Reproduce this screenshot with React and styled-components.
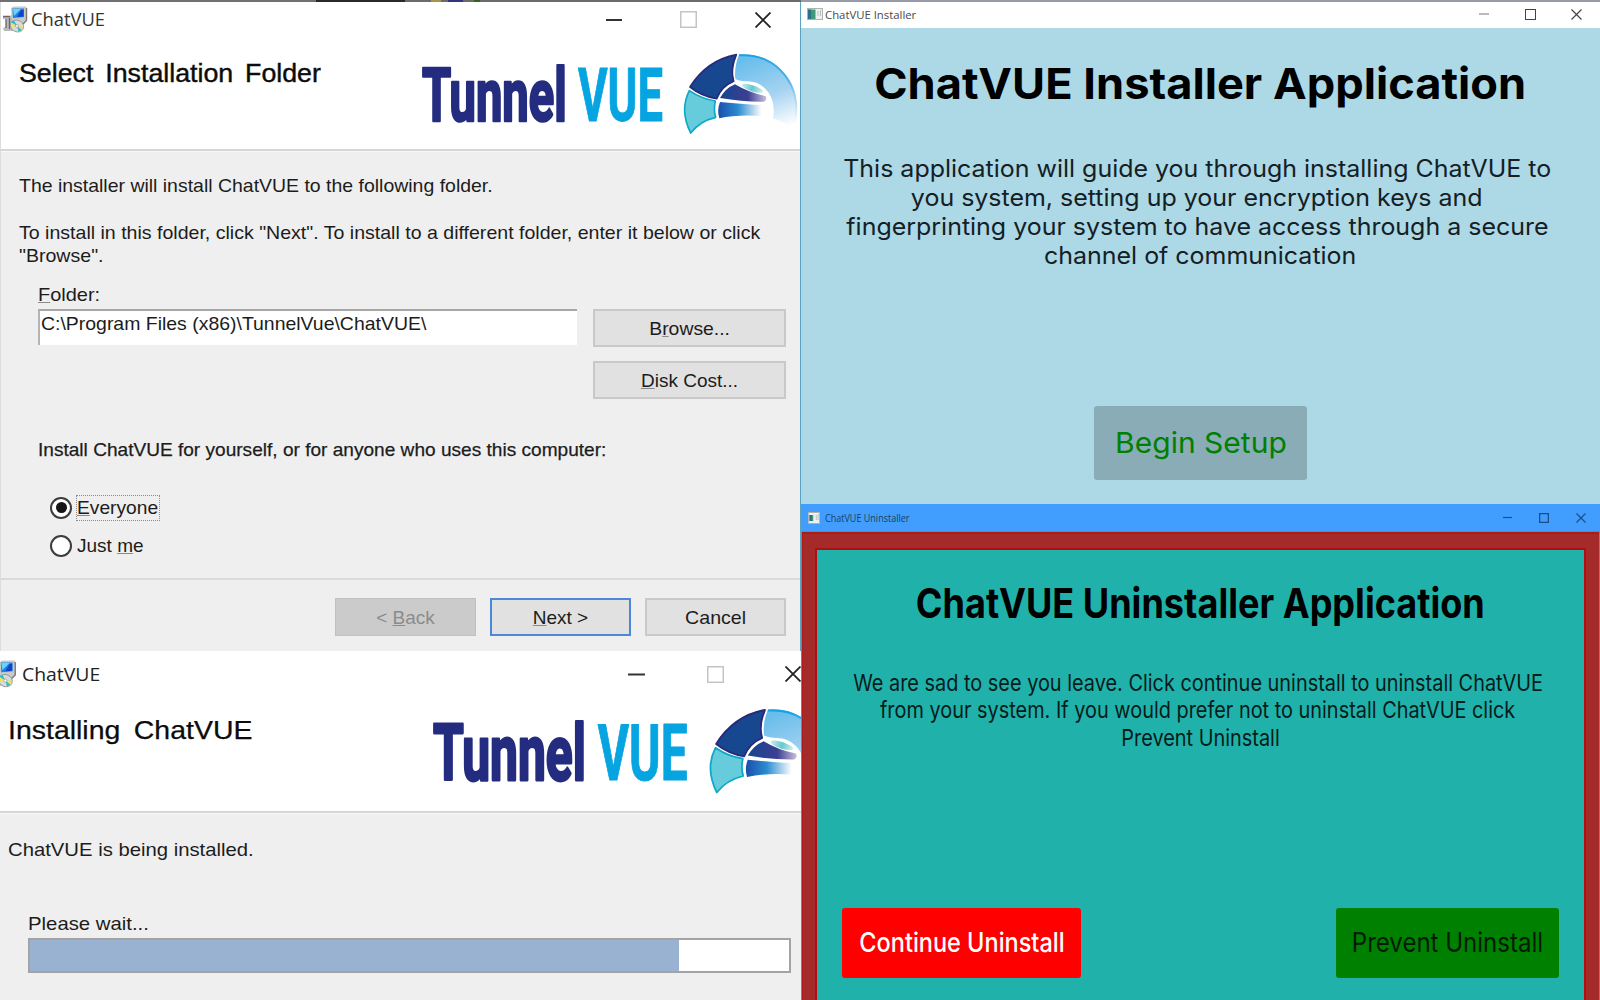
import React from "react";
import styled, { createGlobalStyle } from "styled-components";

const GlobalStyle = createGlobalStyle`
  * { box-sizing: border-box; }
  body { margin: 0; background: #fff; overflow: hidden; }
`;

const dialogFont = '"Liberation Sans", Arial, sans-serif';
const captionFont = '"Open Sans", "Segoe UI", sans-serif';
const appFont = 'Inter, sans-serif';

const Board = styled.main`
  display: grid;
  grid-template-columns: 801px 799px;
  width: 1600px;
  height: 1000px;
  overflow: hidden;
`;

const Column = styled.div`
  display: flex;
  flex-direction: column;
  min-width: 0;
  overflow: hidden;
`;

/* Text primitive: one line, optionally condensed or expanded */
const Line = styled.div`
  font-family: ${(p) => p.$font || dialogFont};
  font-size: ${(p) => p.$size || 19}px;
  font-weight: ${(p) => p.$weight || 400};
  line-height: ${(p) => p.$lh || 23}px;
  word-spacing: ${(p) => p.$word || 0}px;
  color: ${(p) => p.$color || "#1c1c1c"};
  -webkit-text-stroke: ${(p) => p.$stroke || 0}px currentColor;
  white-space: pre;
  transform: scaleX(${(p) => p.$stretch || 1});
  transform-origin: ${(p) => p.$origin || "left"} center;
  text-align: ${(p) => p.$origin || "left"};
`;

const Key = styled.span`
  text-decoration: underline;
  text-decoration-thickness: 1px;
  text-decoration-color: #8a8a8a;
  text-underline-offset: 1px;
`;

/* Wizard windows */
const DesktopStrip = styled.div`
  height: 2px;
  flex: none;
  background: linear-gradient(
    90deg,
    #707070 316px, #2b2727 316px 405px, #6b6b6b 405px 431px,
    #a8934a 431px 441px, #6b6b6b 441px 448px, #34347e 448px 463px,
    #6b6b6b 463px 474px, #2f6423 474px 480px, #6b6b6b 480px
  );
`;

const Wizard = styled.section`
  display: flex;
  flex-direction: column;
  flex: none;
  height: ${(p) => p.$height}px;
  background: #efefef;
  border-left: ${(p) => (p.$edge ? "1px solid #dcdcdc" : "0")};
  border-right: ${(p) => (p.$edge ? "1px solid #5ba3bf" : "0")};
  overflow: hidden;
`;

const WizardBar = styled.header`
  display: flex;
  align-items: center;
  flex: none;
  height: ${(p) => p.$height}px;
  padding: ${(p) => p.$pad};
  gap: ${(p) => p.$gap}px;
  background: #fff;
`;

const WindowControls = styled.div`
  display: flex;
  align-items: center;
  gap: ${(p) => p.$gap}px;
  margin-left: auto;
  svg { display: block; flex: none; }
`;

const Banner = styled.div`
  display: flex;
  justify-content: space-between;
  flex: none;
  height: ${(p) => p.$height}px;
  padding-left: ${(p) => p.$left}px;
  background: #fff;
  border-bottom: 2px solid #d6d6d6;
  box-shadow: 0 1px 0 #f8f8f8;
`;

const BannerHeading = styled.div`
  padding-top: ${(p) => p.$top}px;
`;

const LogoSlot = styled.div`
  flex: none;
  width: ${(p) => p.$width}px;
  padding-top: ${(p) => p.$top}px;
  svg { display: block; overflow: visible; }
`;

const WizardBody = styled.div`
  flex: 1;
  padding: ${(p) => p.$pad};
`;

const Paragraph = styled.div`
  margin-bottom: ${(p) => p.$after || 0}px;
`;

const FolderRow = styled.div`
  display: flex;
  gap: 16px;
  margin-top: 3px;
  padding-left: 19px;
`;

const FolderField = styled.div`
  width: 539px;
  height: 36px;
  padding: 1px 0 0 1px;
  background: #fff;
  border-top: 2px solid #a6a6a6;
  border-left: 2px solid #b4b4b4;
`;

const ButtonStack = styled.div`
  display: flex;
  flex-direction: column;
  gap: 14px;
`;

const WizardButton = styled.button`
  display: flex;
  align-items: center;
  justify-content: center;
  width: ${(p) => p.$width || 141}px;
  height: 38px;
  padding: 0;
  background: ${(p) => (p.$kind === "disabled" ? "#cbcbcb" : "#e1e1e1")};
  border: ${(p) => (p.$kind === "default" ? "2px solid #4c87d8" : p.$kind === "disabled" ? "1px solid #c0c0c0" : "2px solid #c9c9c9")};
`;

const ScopeText = styled.div`
  padding: 38.5px 0 28px 19px;
`;

const ScopeOptions = styled.div`
  padding-left: 31px;
`;

const RadioRow = styled.div`
  display: flex;
  align-items: center;
  gap: 4px;
  height: 38.5px;
`;

const Radio = styled.span`
  display: grid;
  place-items: center;
  width: 22px;
  height: 22px;
  border: 2px solid #3c3c3c;
  border-radius: 50%;
  background: #fff;
  &::after {
    content: "";
    width: 11px;
    height: 11px;
    border-radius: 50%;
    background: ${(p) => (p.$on ? "#161616" : "transparent")};
  }
`;

const FocusBox = styled.span`
  display: block;
  width: 84px;
  height: 26px;
  padding-left: 1px;
  outline: ${(p) => (p.$on ? "1px dotted #8c8c8c" : "none")};
  outline-offset: -1px;
`;

const Footer = styled.footer`
  display: flex;
  justify-content: flex-end;
  gap: 14px;
  flex: none;
  height: 73px;
  padding: 18px 14px 0 0;
  border-top: 2px solid #dadada;
`;

const ClippedIcon = styled.div`
  width: 17px;
  height: 28px;
  overflow: hidden;
  display: flex;
  justify-content: flex-end;
  flex: none;
  svg { flex: none; }
`;

const ProgressGroup = styled.div`
  padding-left: 20px;
`;

const Progress = styled.div`
  width: 763px;
  height: 35px;
  margin-top: 2.5px;
  background: #fff;
  border: 2px solid #a3a3a3;
`;

const ProgressFill = styled.div`
  width: ${(p) => p.$value}%;
  height: 100%;
  background: #9ab2d1;
`;

/* Application windows */
const AppWindow = styled.section`
  display: flex;
  flex-direction: column;
  flex: none;
  height: ${(p) => p.$height}px;
  border-top: ${(p) => (p.$strip ? "2px solid #979ba8" : "0")};
  overflow: hidden;
`;

const AppBar = styled.header`
  display: flex;
  align-items: center;
  flex: none;
  height: ${(p) => p.$height}px;
  padding: ${(p) => p.$pad};
  gap: ${(p) => p.$gap}px;
  background: ${(p) => p.$bg};
`;

const InstallerBody = styled.div`
  display: flex;
  flex-direction: column;
  align-items: center;
  flex: 1;
  padding: 29px 0 24px;
  background: #add8e6;
`;

const UninstallerFrame = styled.div`
  display: flex;
  flex: 1;
  margin: 0 1px;
  padding: 16px 15px 0 14px;
  background: #a52a2a;
  border-top: 2px solid #b01c10;
  border-left: 1px solid #ad1c1c;
  box-shadow: 0 0 0 1px #8079b4;
`;

const UninstallerBody = styled.div`
  display: flex;
  flex-direction: column;
  align-items: center;
  flex: 1;
  min-width: 0;
  padding: 27.5px 25px 22px;
  background: #20b2aa;
  box-shadow: 0 0 0 2px #b20d12;
`;

const Copy = styled.div`
  display: flex;
  flex-direction: column;
  align-items: center;
  margin-top: ${(p) => p.$top}px;
`;

const Actions = styled.div`
  display: flex;
  justify-content: space-between;
  width: 100%;
  margin-top: auto;
`;

const AppButton = styled.button`
  display: flex;
  align-items: center;
  justify-content: center;
  width: ${(p) => p.$width}px;
  height: ${(p) => p.$height}px;
  margin-top: auto;
  padding: 0;
  border: 0;
  border-radius: 3px;
  background: ${(p) => p.$bg};
`;

const Minimize = ({ w = 16, color = "#333", sw = 2 }) => (
  <svg width={w} height={w} viewBox={`0 0 ${w} ${w}`}>
    <path d={`M0 ${w / 2}H${w}`} stroke={color} strokeWidth={sw} />
  </svg>
);
const Maximize = ({ w = 16, color = "#c4c4c4", sw = 1.5 }) => (
  <svg width={w} height={w} viewBox={`0 0 ${w} ${w}`}>
    <rect x={sw / 2} y={sw / 2} width={w - sw} height={w - sw} fill="none" stroke={color} strokeWidth={sw} />
  </svg>
);
const Close = ({ w = 16, color = "#222", sw = 1.8 }) => (
  <svg width={w} height={w} viewBox={`0 0 ${w} ${w}`}>
    <path d={`M.5 .5L${w - 0.5} ${w - 0.5}M${w - 0.5} .5L.5 ${w - 0.5}`} stroke={color} strokeWidth={sw} />
  </svg>
);

const SetupIcon = ({ scale = 1 }) => (
  <svg width={26 * scale} height={27 * scale} viewBox="0 0 26 27">
    <path d="M1 10h7l3-2v17H2l-1-3 3-1V13H1z" fill="#b9b9b9" />
    <path d="M1 10.500h7M4 13v9M7.500 12v11" stroke="#666" strokeWidth="1.300" fill="none" />
    <path d="M9 2l3-1.500H24l.800 2V14l-3 3H10z" fill="#c6cacb" />
    <path d="M24.500 2v12.500L21 18H11" fill="none" stroke="#7b7b7b" strokeWidth="1.400" />
    <path d="M10.500 2.500H22V11l-11 1z" fill="#1d7fe8" />
    <path d="M11 3h8l-7 7z" fill="#63d6fb" />
    <path d="M19 4h2.500v6.500L15 11z" fill="#1143c8" />
    <ellipse cx="15" cy="20" rx="6.800" ry="5.800" transform="rotate(24 15 20)" fill="#d7dcd9" stroke="#939393" strokeWidth=".8" />
    <path d="M15 20L9 16l3-1.500z" fill="#18bdd0" />
    <path d="M15 20l-6-3 0 4z" fill="#f1e24e" />
    <path d="M15 20l5 4-3.500 1.500z" fill="#20c3cd" />
    <path d="M15 20l5.500 0v4z" fill="#ece06a" />
    <circle cx="15" cy="20" r="1.500" fill="#fff" stroke="#888" strokeWidth=".6" />
  </svg>
);

const AppIcon = ({ w, h, small }) => (
  <svg width={w} height={h} viewBox="0 0 16 12" preserveAspectRatio="none">
    <rect x=".5" y=".5" width="15" height="11" fill="#eef1ee" stroke="#a9b3b0" />
    <rect x={small ? 2 : 1} y={small ? 3 : 1.5} width={small ? 5 : 7.5} height={small ? 6 : 9.5} fill="#3c9a78" />
    <rect x={small ? 2 : 1} y={small ? 3 : 1.5} width="3" height={small ? 6 : 9.5} fill="#2d6f86" />
    <path d="M11 3v5M13.500 2v6" stroke="#b5bdb6" strokeWidth="1" />
  </svg>
);

const Logo = ({ scale = 1, id }) => (
  <svg width={380 * scale} height={(250 / 3) * scale} viewBox="60 155 1140 250">
    <defs>
      <linearGradient id={`${id}-sky`} gradientUnits="userSpaceOnUse" x1="1060" y1="165" x2="1150" y2="385">
        <stop offset="0" stopColor="#67bdec" />
        <stop offset=".55" stopColor="#a6d3f1" />
        <stop offset="1" stopColor="#fff" />
      </linearGradient>
      <linearGradient id={`${id}-rim`} gradientUnits="userSpaceOnUse" x1="1060" y1="165" x2="1190" y2="370">
        <stop offset="0" stopColor="#15a3e4" />
        <stop offset=".5" stopColor="#56b4e8" />
        <stop offset="1" stopColor="#fff" />
      </linearGradient>
      <linearGradient id={`${id}-dusk`}>
        <stop offset="0" stopColor="#15458f" />
        <stop offset=".6" stopColor="#3b3f92" />
        <stop offset="1" stopColor="#c9c0df" />
      </linearGradient>
      <linearGradient id={`${id}-beam`}>
        <stop offset="0" stopColor="#1b4eaa" />
        <stop offset=".45" stopColor="#2a8bd0" />
        <stop offset="1" stopColor="#fff" />
      </linearGradient>
      <linearGradient id={`${id}-glint`}>
        <stop offset="0" stopColor="#cdeef0" />
        <stop offset=".5" stopColor="#64c9cf" />
        <stop offset="1" stopColor="#d5f0f2" />
      </linearGradient>
    </defs>
    <g fontFamily="Roboto, sans-serif" fontWeight="700" fontSize="221" strokeLinejoin="round">
      <text x="66" y="361" textLength="434" lengthAdjust="spacingAndGlyphs" fill="#242c80" stroke="#242c80" strokeWidth="8">Tunnel</text>
      <text x="534" y="361" textLength="255" lengthAdjust="spacingAndGlyphs" fill="#06a4e1" stroke="#06a4e1" strokeWidth="3">VUE</text>
    </g>
    <path d="M1017 163C1120 155 1192 235 1191 330Q1190 362 1185 388Q1158 366 1119 354C1132 290 1092 243 1042 243Q1020 243 1006 236Q1002 200 1017 163Z" fill={`url(#${id}-sky)`} />
    <path d="M1017 165C1118 158 1190 236 1189 330L1184 386" fill="none" stroke={`url(#${id}-rim)`} strokeWidth="6" />
    <path d="M870 260Q920 180 1009 163Q990 208 1001 243Q965 258 950 295Q905 288 870 260Z" fill="#16478f" stroke="#29297c" strokeWidth="5" strokeLinejoin="round" />
    <path d="M868 271Q905 296 946 302Q940 328 947 351Q900 362 872 398Q838 330 868 271Z" fill="#66ccdb" stroke="#0ca8c8" strokeWidth="5" strokeLinejoin="round" />
    <path d="M1005 252Q1045 276 1096 287Q1104 297 1092 304Q1030 305 960 293Q976 264 1005 252Z" fill={`url(#${id}-dusk)`} />
    <path d="M960 305Q1020 310 1085 315V347Q1010 342 958 354Q950 330 960 305Z" fill={`url(#${id}-beam)`} />
    <ellipse cx="1057" cy="264" rx="34" ry="9" transform="rotate(18 1057 264)" fill={`url(#${id}-glint)`} />
  </svg>
);

function FolderWizardWindow() {
  return (
    <Wizard $height={649} $edge>
      <WizardBar $height={36} $pad="0 29px 1px 1px" $gap={3}>
        <SetupIcon />
        <Line $font={captionFont} $stretch={0.965} $color="#333">ChatVUE</Line>
        <WindowControls $gap={58}>
          <Minimize /><Maximize w={17} /><Close />
        </WindowControls>
      </WizardBar>
      <Banner $height={113} $left={18}>
        <BannerHeading $top={19.5}>
          <Line $size={25} $lh={30} $stretch={1.07} $word={4.2} $stroke={0.4} $color="#0c0c0c">Select Installation Folder</Line>
        </BannerHeading>
        <LogoSlot $width={380} $top={13.7}><Logo id="folder" /></LogoSlot>
      </Banner>
      <WizardBody $pad="23px 13px 0 18px">
        <Paragraph $after={23.5}>
          <Line $stretch={1.024}>The installer will install ChatVUE to the following folder.</Line>
        </Paragraph>
        <Paragraph $after={16.5}>
          <Line $stretch={1.029}>To install in this folder, click "Next". To install to a different folder, enter it below or click</Line>
          <Line $stretch={1.029}>"Browse".</Line>
        </Paragraph>
        <FolderRow><Line $stretch={1.05}><Key>F</Key>older:</Line></FolderRow>
        <FolderRow>
          <FolderField>
            <Line $stretch={1.023}>C:\Program Files (x86)\TunnelVue\ChatVUE\</Line>
          </FolderField>
          <ButtonStack>
            <WizardButton $width={193}><Line $stretch={1.02} $origin="center">B<Key>r</Key>owse...</Line></WizardButton>
            <WizardButton $width={193}><Line $origin="center"><Key>D</Key>isk Cost...</Line></WizardButton>
          </ButtonStack>
        </FolderRow>
        <ScopeText>
          <Line $stretch={1.004} $stroke={0.25}>Install ChatVUE for yourself, or for anyone who uses this computer:</Line>
        </ScopeText>
        <ScopeOptions>
          <RadioRow><Radio $on /><FocusBox $on><Line $lh={26} $stretch={1.01}><Key>E</Key>veryone</Line></FocusBox></RadioRow>
          <RadioRow><Radio /><FocusBox><Line $lh={26}>Just <Key>m</Key>e</Line></FocusBox></RadioRow>
        </ScopeOptions>
      </WizardBody>
      <Footer>
        <WizardButton $kind="disabled"><Line $color="#8b8b8b" $origin="center">&lt; <Key>B</Key>ack</Line></WizardButton>
        <WizardButton $kind="default"><Line $origin="center"><Key>N</Key>ext &gt;</Line></WizardButton>
        <WizardButton><Line $stretch={1.03} $origin="center">Cancel</Line></WizardButton>
      </Footer>
    </Wizard>
  );
}

function ProgressWizardWindow() {
  return (
    <Wizard $height={349}>
      <WizardBar $height={46} $pad="0" $gap={5}>
        <ClippedIcon><SetupIcon scale={1.03} /></ClippedIcon>
        <Line $font={captionFont} $stretch={1.02} $color="#222">ChatVUE</Line>
        <WindowControls $gap={61.5}>
          <Minimize w={17} /><Maximize w={17} /><Close w={16} />
        </WindowControls>
      </WizardBar>
      <Banner $height={116} $left={8}>
        <BannerHeading $top={17.5}>
          <Line $size={26} $lh={30} $stretch={1.095} $word={5} $stroke={0.25} $color="#0c0c0c">Installing ChatVUE</Line>
        </BannerHeading>
        <LogoSlot $width={370} $top={10.2}><Logo id="progress" scale={1.056} /></LogoSlot>
      </Banner>
      <WizardBody $pad="24.5px 10px 0 8px">
        <Paragraph $after={51.5}>
          <Line $stretch={1.067}>ChatVUE is being installed.</Line>
        </Paragraph>
        <ProgressGroup>
          <Line $stretch={1.07}>Please wait...</Line>
          <Progress><ProgressFill $value={85.5} /></Progress>
        </ProgressGroup>
      </WizardBody>
    </Wizard>
  );
}

function InstallerWindow() {
  const copy = [
    "This application will guide you through installing ChatVUE to ",
    "you system, setting up your encryption keys and ",
    "fingerprinting your system to have access through a secure ",
    "channel of communication",
  ];
  return (
    <AppWindow $height={504} $strip>
      <AppBar $height={26} $bg="#fff" $pad="0 18px 2px 6px" $gap={2}>
        <AppIcon w={16} h={12} />
        <Line $font={captionFont} $size={11} $stretch={1.03} $color="#4a4a4a">ChatVUE Installer</Line>
        <WindowControls $gap={35.5}>
          <Minimize w={10} color="#777" sw={1} />
          <Maximize w={11} color="#444" sw={1} />
          <Close w={11} color="#444" sw={1.2} />
        </WindowControls>
      </AppBar>
      <InstallerBody>
        <Line $font={appFont} $size={43} $weight={700} $lh={52} $stretch={1.051} $origin="center" $color="#000">ChatVUE Installer Application</Line>
        <Copy $top={44.5}>
          {copy.map((t) => (
            <Line key={t} $font={appFont} $size={24} $lh={29.2} $stretch={1.04} $origin="center" $color="#142024">{t}</Line>
          ))}
        </Copy>
        <AppButton $width={213} $height={74} $bg="#8aacb7">
          <Line $font={appFont} $size={29} $lh={40} $stretch={1.035} $origin="center" $color="#008000">Begin Setup</Line>
        </AppButton>
      </InstallerBody>
    </AppWindow>
  );
}

function UninstallerWindow() {
  const copy = [
    "We are sad to see you leave. Click continue uninstall to uninstall ChatVUE ",
    "from your system. If you would prefer not to uninstall ChatVUE click ",
    "Prevent Uninstall",
  ];
  return (
    <AppWindow $height={496}>
      <AppBar $height={28} $bg="#419eff" $pad="0 14px 1px 7px" $gap={5}>
        <AppIcon w={12} h={12} small />
        <Line $font={captionFont} $size={11} $stretch={0.82} $color="#1b3f66">ChatVUE Uninstaller</Line>
        <WindowControls $gap={27}>
          <Minimize w={9} color="#1b4f88" sw={1.2} />
          <Maximize w={10} color="#1b4f88" sw={1.3} />
          <Close w={10} color="#1b4f88" sw={1.2} />
        </WindowControls>
      </AppBar>
      <UninstallerFrame>
        <UninstallerBody>
          <Line $font={appFont} $size={41} $weight={700} $lh={50} $stretch={0.88} $origin="center" $color="#000">ChatVUE Uninstaller Application</Line>
          <Copy $top={42}>
            {copy.map((t) => (
              <Line key={t} $font={appFont} $size={23} $lh={27.6} $stretch={0.865} $origin="center" $color="#051c1b">{t}</Line>
            ))}
          </Copy>
          <Actions>
            <AppButton $width={239} $height={70} $bg="#ff0000">
              <Line $font={appFont} $size={27} $weight={500} $lh={40} $stretch={0.87} $origin="center" $color="#fff">Continue Uninstall</Line>
            </AppButton>
            <AppButton $width={223} $height={70} $bg="#008000">
              <Line $font={appFont} $size={27} $lh={40} $stretch={0.89} $origin="center" $color="#001c00">Prevent Uninstall</Line>
            </AppButton>
          </Actions>
        </UninstallerBody>
      </UninstallerFrame>
    </AppWindow>
  );
}

export default function App() {
  return (
    <>
      <GlobalStyle />
      <Board>
        <Column>
          <DesktopStrip />
          <FolderWizardWindow />
          <ProgressWizardWindow />
        </Column>
        <Column>
          <InstallerWindow />
          <UninstallerWindow />
        </Column>
      </Board>
    </>
  );
}
